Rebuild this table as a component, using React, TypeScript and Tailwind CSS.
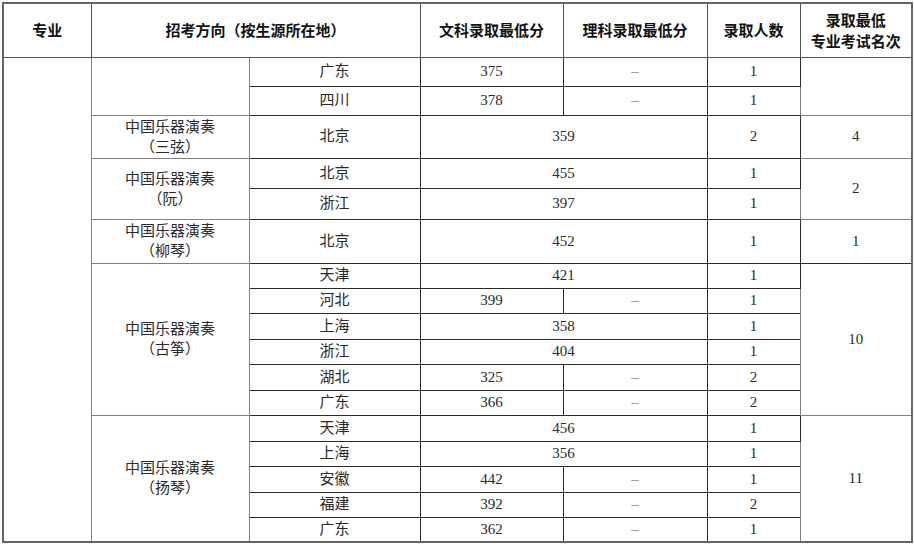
import React from "react";

const body = "font-['Liberation_Serif','Noto_Sans_CJK_SC',serif] text-[15px] text-[#2a2a2a]";
const td = "border border-[#2b2b2b] p-0 text-center align-middle";
const tdg = "border border-[#808080] p-0 text-center align-middle";
const th = "border border-[#555] p-0 text-center align-middle font-['Noto_Sans_CJK_SC',sans-serif] font-bold text-[15px] text-[#111]";
const dash = "text-[#8a8a8a]";

function Two({ a, b }: { a: string; b: string }) {
  return (
    <div className="leading-[20px]">
      <div>{a}</div>
      <div>{b}</div>
    </div>
  );
}

export default function App() {
  return (
    <div className="w-[914px] h-[546px] bg-white pl-[2px] pt-[2px]">
      <table className={`border-collapse table-fixed w-[909px] border-2 border-[#666] ${body}`}>
        <colgroup>
          <col className="w-[88px]" />
          <col className="w-[158px]" />
          <col className="w-[171px]" />
          <col className="w-[143px]" />
          <col className="w-[144px]" />
          <col className="w-[93px]" />
          <col className="w-[112px]" />
        </colgroup>
        <tbody>
          <tr className="h-[54px]">
            <td className={th}>专业</td>
            <td className={th} colSpan={2}>招考方向（按生源所在地）</td>
            <td className={th}>文科录取最低分</td>
            <td className={th}>理科录取最低分</td>
            <td className={th}>录取人数</td>
            <td className={th}>
              <div className="leading-[21px]">
                <div>录取最低</div>
                <div>专业考试名次</div>
              </div>
            </td>
          </tr>
          {/* Row 1 */}
          <tr className="h-[29px]">
            <td className={tdg} rowSpan={17}></td>
            <td className={tdg} rowSpan={2}></td>
            <td className={td}>广东</td>
            <td className={td}>375</td>
            <td className={`${td} ${dash}`}>–</td>
            <td className={td}>1</td>
            <td className={tdg} rowSpan={2}></td>
          </tr>
          <tr className="h-[29px]">
            <td className={td}>四川</td>
            <td className={td}>378</td>
            <td className={`${td} ${dash}`}>–</td>
            <td className={td}>1</td>
          </tr>
          {/* 三弦 */}
          <tr className="h-[43px]">
            <td className={tdg}><Two a="中国乐器演奏" b="（三弦）" /></td>
            <td className={td}>北京</td>
            <td className={td} colSpan={2}>359</td>
            <td className={td}>2</td>
            <td className={tdg}>4</td>
          </tr>
          {/* 阮 */}
          <tr className="h-[30px]">
            <td className={tdg} rowSpan={2}><Two a="中国乐器演奏" b="（阮）" /></td>
            <td className={td}>北京</td>
            <td className={td} colSpan={2}>455</td>
            <td className={td}>1</td>
            <td className={tdg} rowSpan={2}>2</td>
          </tr>
          <tr className="h-[31px]">
            <td className={td}>浙江</td>
            <td className={td} colSpan={2}>397</td>
            <td className={td}>1</td>
          </tr>
          {/* 柳琴 */}
          <tr className="h-[44px]">
            <td className={tdg}><Two a="中国乐器演奏" b="（柳琴）" /></td>
            <td className={td}>北京</td>
            <td className={td} colSpan={2}>452</td>
            <td className={td}>1</td>
            <td className={td}>1</td>
          </tr>
          {/* 古筝 */}
          <tr className="h-[25px]">
            <td className={tdg} rowSpan={6}><Two a="中国乐器演奏" b="（古筝）" /></td>
            <td className={td}>天津</td>
            <td className={td} colSpan={2}>421</td>
            <td className={td}>1</td>
            <td className={tdg} rowSpan={6}>10</td>
          </tr>
          <tr className="h-[25px]">
            <td className={td}>河北</td>
            <td className={td}>399</td>
            <td className={`${td} ${dash}`}>–</td>
            <td className={td}>1</td>
          </tr>
          <tr className="h-[26px]">
            <td className={td}>上海</td>
            <td className={td} colSpan={2}>358</td>
            <td className={td}>1</td>
          </tr>
          <tr className="h-[25px]">
            <td className={td}>浙江</td>
            <td className={td} colSpan={2}>404</td>
            <td className={td}>1</td>
          </tr>
          <tr className="h-[26px]">
            <td className={td}>湖北</td>
            <td className={td}>325</td>
            <td className={`${td} ${dash}`}>–</td>
            <td className={td}>2</td>
          </tr>
          <tr className="h-[25px]">
            <td className={td}>广东</td>
            <td className={td}>366</td>
            <td className={`${td} ${dash}`}>–</td>
            <td className={td}>2</td>
          </tr>
          {/* 扬琴 */}
          <tr className="h-[26px]">
            <td className={tdg} rowSpan={5}><Two a="中国乐器演奏" b="（扬琴）" /></td>
            <td className={td}>天津</td>
            <td className={td} colSpan={2}>456</td>
            <td className={td}>1</td>
            <td className={tdg} rowSpan={5}>11</td>
          </tr>
          <tr className="h-[25px]">
            <td className={td}>上海</td>
            <td className={td} colSpan={2}>356</td>
            <td className={td}>1</td>
          </tr>
          <tr className="h-[26px]">
            <td className={td}>安徽</td>
            <td className={td}>442</td>
            <td className={`${td} ${dash}`}>–</td>
            <td className={td}>1</td>
          </tr>
          <tr className="h-[25px]">
            <td className={td}>福建</td>
            <td className={td}>392</td>
            <td className={`${td} ${dash}`}>–</td>
            <td className={td}>2</td>
          </tr>
          <tr className="h-[25px]">
            <td className={td}>广东</td>
            <td className={td}>362</td>
            <td className={`${td} ${dash}`}>–</td>
            <td className={td}>1</td>
          </tr>
        </tbody>
      </table>
    </div>
  );
}
